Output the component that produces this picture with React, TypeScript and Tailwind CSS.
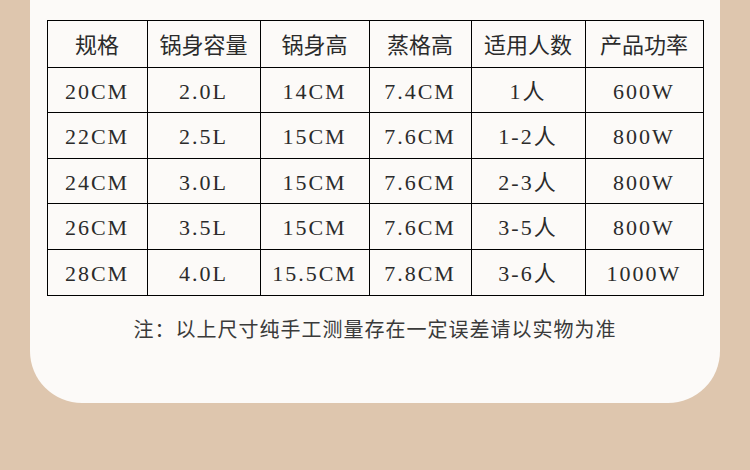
const FONT = {
  fontFamily: '"Liberation Serif", "Noto Sans CJK SC", serif',
};

const columns = ["规格", "锅身容量", "锅身高", "蒸格高", "适用人数", "产品功率"];
const colWidths = ["w-[100px]", "w-[113px]", "w-[109px]", "w-[102px]", "w-[114px]", "w-[118px]"];

const rows = [
  ["20CM", "2.0L", "14CM", "7.4CM", "1人", "600W"],
  ["22CM", "2.5L", "15CM", "7.6CM", "1-2人", "800W"],
  ["24CM", "3.0L", "15CM", "7.6CM", "2-3人", "800W"],
  ["26CM", "3.5L", "15CM", "7.6CM", "3-5人", "800W"],
  ["28CM", "4.0L", "15.5CM", "7.8CM", "3-6人", "1000W"],
];

const rowHeights = ["h-[45px]", "h-[46px]", "h-[45px]", "h-[46px]", "h-[46px]"];

export default function App() {
  return (
    <div className="h-[470px] w-full bg-[#dec6ae]" style={FONT}>
      <div className="mx-[30px] flex h-[403px] flex-col items-center rounded-b-[52px] bg-[#fcfaf8] pt-[20px]">
        <table className="w-[656px] table-fixed border-collapse text-[#2b2b2b]">
          <thead>
            <tr className="h-[47px]">
              {columns.map((col, i) => (
                <th
                  key={col}
                  className={`${colWidths[i]} border-[1.5px] border-black pt-[3px] text-center text-[22px] font-normal leading-[28px]`}
                >
                  {col}
                </th>
              ))}
            </tr>
          </thead>
          <tbody>
            {rows.map((row, r) => (
              <tr key={row[0]} className={rowHeights[r]}>
                {row.map((cell, c) => (
                  <td
                    key={c}
                    className="border-[1.5px] border-black pt-[3px] text-center text-[22px] leading-[28px] tracking-[2px]"
                  >
                    {cell}
                  </td>
                ))}
              </tr>
            ))}
          </tbody>
        </table>

        <p className="mt-[20px] text-[20px] leading-[28px] tracking-[1px] text-[#3a3a3a]">
          注：以上尺寸纯手工测量存在一定误差请以实物为准
        </p>
      </div>
    </div>
  );
}
